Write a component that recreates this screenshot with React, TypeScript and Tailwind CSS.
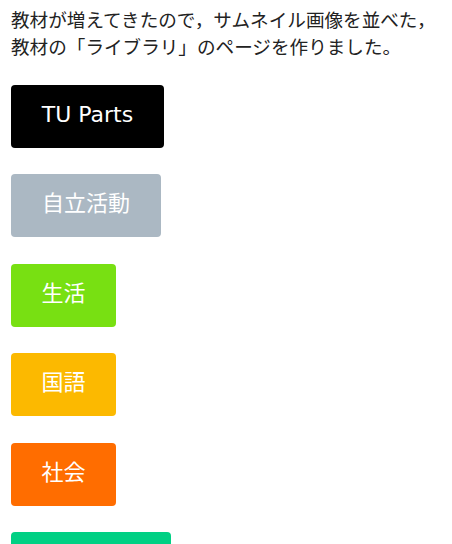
import React from "react";

const items = [
  { label: "TU Parts", cls: "bg-[#000000] w-[153px]" },
  { label: "自立活動", cls: "bg-[#abb8c3] w-[150px]" },
  { label: "生活", cls: "bg-[#78e012] w-[105px]" },
  { label: "国語", cls: "bg-[#fcb900] w-[105px]" },
  { label: "社会", cls: "bg-[#ff6d00] w-[105px]" },
  { label: "", cls: "bg-[#00d084] w-[160px]" },
];

export default function App() {
  return (
    <div
      className="w-[452px] h-[544px] overflow-hidden bg-white px-[11px] pt-[5px]"
      style={{ fontFamily: '"Noto Sans CJK JP", "Noto Sans", sans-serif' }}
    >
      <p className="text-[18.6px] leading-[27px] text-[#222222] whitespace-nowrap">
        教材が増えてきたので，サムネイル画像を並べた，
        <br />
        教材の「ライブラリ」のページを作りました。
      </p>
      <div className="mt-[26px] flex flex-col items-start gap-[26.4px]">
        {items.map((it, i) => (
          <div
            key={i}
            className={`${it.cls} h-[63px] shrink-0 rounded-[4px] flex items-center justify-center pb-[3px] text-white text-[22px] leading-none`}
            style={{ fontFamily: '"DejaVu Sans", "Noto Sans CJK JP", sans-serif' }}
          >
            {it.label}
          </div>
        ))}
      </div>
    </div>
  );
}
